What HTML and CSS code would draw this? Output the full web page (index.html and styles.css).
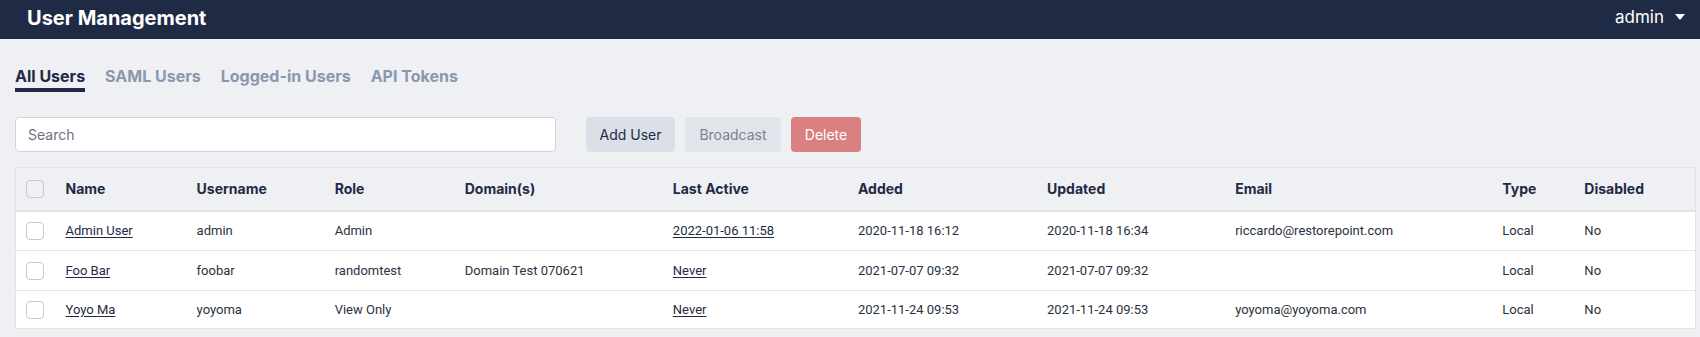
FILE: index.html
```html
<!DOCTYPE html>
<html lang="en">
<head>
<meta charset="utf-8">
<title>User Management</title>
<link rel="stylesheet" href="styles.css">
</head>
<body>
<header class="topbar">
  <h1 class="title">User Management</h1>
  <div class="user-menu">
    <span>admin</span>
    <svg class="caret" width="12" height="8" viewBox="0 0 12 8"><path d="M1 1h10L6 7z" fill="#fff"/></svg>
  </div>
</header>
<main class="content">
  <nav class="tabs">
    <a class="tab active">All Users</a>
    <a class="tab">SAML Users</a>
    <a class="tab">Logged-in Users</a>
    <a class="tab">API Tokens</a>
  </nav>
  <div class="toolbar">
    <input class="search" type="text" placeholder="Search">
    <div class="actions">
      <button class="btn btn-add">Add User</button>
      <button class="btn btn-muted">Broadcast</button>
      <button class="btn btn-danger">Delete</button>
    </div>
  </div>
  <table class="users">
    <colgroup>
      <col style="width:50px"><col style="width:131px"><col style="width:138px"><col style="width:130px"><col style="width:208px"><col style="width:185px"><col style="width:189px"><col style="width:188px"><col style="width:267px"><col style="width:82px"><col style="width:111px">
    </colgroup>
    <thead>
      <tr>
        <th><span class="check"></span></th>
        <th>Name</th><th>Username</th><th>Role</th><th>Domain(s)</th><th>Last Active</th><th>Added</th><th>Updated</th><th>Email</th><th>Type</th><th>Disabled</th>
      </tr>
    </thead>
    <tbody>
      <tr>
        <td><span class="check"></span></td>
        <td><a class="link">Admin User</a></td><td>admin</td><td>Admin</td><td></td><td><a class="link">2022-01-06 11:58</a></td><td>2020-11-18 16:12</td><td>2020-11-18 16:34</td><td>riccardo@restorepoint.com</td><td>Local</td><td>No</td>
      </tr>
      <tr>
        <td><span class="check"></span></td>
        <td><a class="link">Foo Bar</a></td><td>foobar</td><td>randomtest</td><td>Domain Test 070621</td><td><a class="link">Never</a></td><td>2021-07-07 09:32</td><td>2021-07-07 09:32</td><td></td><td>Local</td><td>No</td>
      </tr>
      <tr>
        <td><span class="check"></span></td>
        <td><a class="link">Yoyo Ma</a></td><td>yoyoma</td><td>View Only</td><td></td><td><a class="link">Never</a></td><td>2021-11-24 09:53</td><td>2021-11-24 09:53</td><td>yoyoma@yoyoma.com</td><td>Local</td><td>No</td>
      </tr>
    </tbody>
  </table>
</main>
</body>
</html>
```
FILE: styles.css
```css
* { box-sizing: border-box; }
html, body { margin: 0; padding: 0; }
body {
  background: #eff0f4;
  font-family: Inter, "Noto Sans", sans-serif;
  color: #1f2a44;
  width: 1700px;
  height: 337px;
  overflow: hidden;
}
.topbar {
  background: #1f2a44;
  height: 39px;
  display: flex;
  align-items: center;
  justify-content: space-between;
  padding: 0 14px 0 27px;
  color: #fff;
}
.title {
  margin: 0 0 4px 0;
  font-size: 20px;
  font-weight: 700;
  line-height: 24px;
}
.user-menu {
  display: flex;
  align-items: center;
  gap: 10px;
  font-size: 17px;
  margin-top: -6px;
}
.caret { display: block; margin-top: 1px; }
.content {
  padding: 0 4px 0 15px;
}
.tabs {
  display: flex;
  gap: 20px;
  padding-top: 27px;
}
.tab {
  font-size: 16px;
  font-weight: 700;
  color: #8a97ad;
  padding-bottom: 2px;
  line-height: 20px;
  border-bottom: 4px solid transparent;
}
.tab.active {
  color: #1f2a44;
  border-bottom-color: #1f2a44;
}
.toolbar {
  display: flex;
  align-items: flex-start;
  margin-top: 25px;
  height: 35px;
}
.search {
  width: 541px;
  height: 35px;
  border: 1px solid #cfd3da;
  border-radius: 4px;
  background: #fff;
  padding: 0 12px;
  font-family: Inter, sans-serif;
  font-size: 14px;
  color: #1f2a44;
  outline: none;
}
.search::placeholder { color: #6b7280; }
.actions {
  display: flex;
  gap: 10px;
  margin-left: 30px;
}
.btn {
  height: 35px;
  border: none;
  border-radius: 4px;
  font-family: Inter, sans-serif;
  font-size: 14px;
  padding: 0;
  white-space: nowrap;
}
.btn-add { background: #dbe0e8; color: #1f2a44; width: 89px; }
.btn-muted { background: #e1e5eb; color: #7c828c; width: 96px; }
.btn-danger { background: #da8080; color: #fff; width: 70px; }
.users {
  margin-top: 15px;
  width: 1681px;
  table-layout: fixed;
  border-collapse: collapse;
  border: 1px solid #e1e3e7;
  background: #fff;
}
.users th {
  background: #eff0f4;
  height: 43px;
  text-align: left;
  font-size: 14px;
  font-weight: 700;
  padding: 0;
  border-bottom: 2px solid #e1e3e7;
  color: #1f2a44;
}
.users td {
  height: 40px;
  padding: 0;
  font-family: Roboto, Inter, sans-serif;
  font-size: 13px;
  color: #2a3140;
  border-bottom: 1px solid #e4e6ea;
}
.users tbody tr:last-child td { border-bottom: none; height: 38px; }
.check {
  display: block;
  width: 18px;
  height: 18px;
  margin-left: 10px;
  border: 1px solid #c6c9cf;
  border-radius: 4px;
  background: #fff;
}
.users th .check { background: #eff0f4; }
.link {
  color: #1f2a44;
  text-decoration: underline;
  text-underline-offset: 2px;
}
```
